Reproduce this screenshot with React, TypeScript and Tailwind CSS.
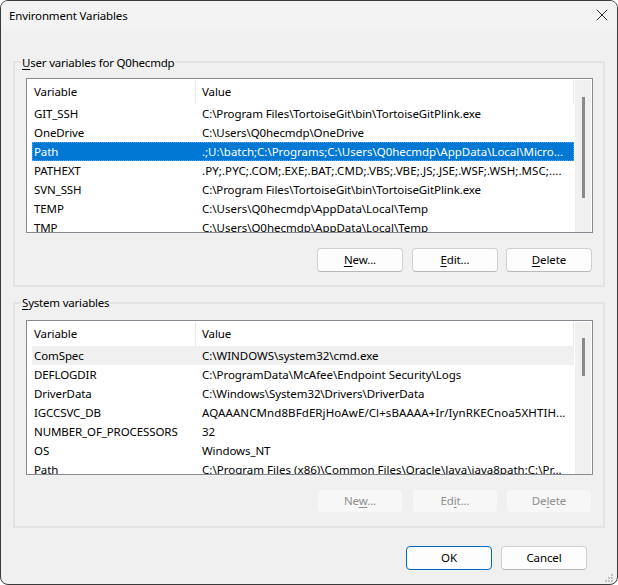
import { X } from 'lucide-react'

type Row = { name: string; value: string; selected?: boolean; hover?: boolean; fit?: string }

const userRows: Row[] = [
  { name: 'GIT_SSH', value: 'C:\\Program Files\\TortoiseGit\\bin\\TortoiseGitPlink.exe' },
  { name: 'OneDrive', value: 'C:\\Users\\Q0hecmdp\\OneDrive' },
  { name: 'Path', value: '.;U:\\batch;C:\\Programs;C:\\Users\\Q0hecmdp\\AppData\\Local\\Micro...', selected: true, fit: 'tracking-[-0.02px]' },
  { name: 'PATHEXT', value: '.PY;.PYC;.COM;.EXE;.BAT;.CMD;.VBS;.VBE;.JS;.JSE;.WSF;.WSH;.MSC;....', fit: 'tracking-[0.08px]' },
  { name: 'SVN_SSH', value: 'C:\\Program Files\\TortoiseGit\\bin\\TortoiseGitPlink.exe' },
  { name: 'TEMP', value: 'C:\\Users\\Q0hecmdp\\AppData\\Local\\Temp', fit: 'tracking-[-0.02px]' },
  { name: 'TMP', value: 'C:\\Users\\Q0hecmdp\\AppData\\Local\\Temp', fit: 'tracking-[-0.02px]' },
]

const systemRows: Row[] = [
  { name: 'ComSpec', value: 'C:\\WINDOWS\\system32\\cmd.exe', hover: true, fit: 'tracking-[-0.03px]' },
  { name: 'DEFLOGDIR', value: 'C:\\ProgramData\\McAfee\\Endpoint Security\\Logs', fit: 'tracking-[-0.04px]' },
  { name: 'DriverData', value: 'C:\\Windows\\System32\\Drivers\\DriverData' },
  { name: 'IGCCSVC_DB', value: 'AQAAANCMnd8BFdERjHoAwE/Cl+sBAAAA+Ir/IynRKECnoa5XHTIH...', fit: 'tracking-[0.09px]' },
  { name: 'NUMBER_OF_PROCESSORS', value: '32' },
  { name: 'OS', value: 'Windows_NT' },
  { name: 'Path', value: 'C:\\Program Files (x86)\\Common Files\\Oracle\\Java\\java8path;C:\\Pr...', fit: 'tracking-[0.02px]' },
]

function VarList({ rows, thumb }: { rows: Row[]; thumb: string }) {
  return (
    <div className="h-[155px] border border-[#868a91] bg-white flex overflow-hidden">
      <div className="w-[547px] shrink-0 pl-[5px]">
        <div className="h-[24px] mt-px flex leading-[23px]">
          <div className="w-[164px] shrink-0 pl-[2px] border-r border-[#e5e5e5]">Variable</div>
          <div className="flex-1 pl-[6px] border-r border-[#e5e5e5]">Value</div>
        </div>
        {rows.map((r) => (
          <div
            key={r.name}
            className={`h-[19px] flex leading-[20px] whitespace-nowrap overflow-hidden ${
              r.selected
                ? 'bg-[#0078d4] text-white outline-1 outline-dotted -outline-offset-1 outline-[#5aa5e0]'
                : r.hover
                  ? 'bg-[#f0f0f0]'
                  : ''
            }`}
          >
            <div className="w-[164px] shrink-0 pl-[2px]">{r.name}</div>
            <div className={`pl-[6px] ${r.fit ?? ''}`}>{r.value}</div>
          </div>
        ))}
      </div>
      <div className="w-[16px] shrink-0 mt-px ml-px bg-[#f0f0f0] relative">
        <div className={`absolute left-[7px] w-[3px] bg-[#8a8a8a] ${thumb}`} />
      </div>
    </div>
  )
}

function Btn({ pre, hot, post, disabled, primary, className = '' }: { pre?: string; hot?: string; post?: string; disabled?: boolean; primary?: boolean; className?: string }) {
  return (
    <div
      className={`w-[86px] h-[24px] rounded-[4px] border flex items-center justify-center ${className} ${
        disabled
          ? 'bg-[#f7f7f7] bg-clip-padding border-[#f0f0f0] text-[#8e8e8e]'
          : primary
            ? 'bg-[#fdfdfd] border-[#0067c0]'
            : 'bg-[#fdfdfd] border-[#d0d0d0] border-b-[#b8b8b8]'
      }`}
    >
      <span>
        {pre}
        {hot && <span className="underline underline-offset-2">{hot}</span>}
        {post}
      </span>
    </div>
  )
}

function Group({ title, hot, rows, thumb, disabled }: { title: string; hot: string; rows: Row[]; thumb: string; disabled?: boolean }) {
  return (
    <div className={`relative h-[226px] border-2 border-[#e3e3e3] pl-[11px] pr-[10px] ${disabled ? 'pt-[16px]' : 'pt-[15px]'}`}>
      <div className={`absolute left-[6px] px-[1px] bg-[#f0f0f0] leading-[18px] tracking-[-0.2px] ${disabled ? 'top-[-10px]' : 'top-[-9px]'}`}>
        <span className="underline underline-offset-2">{hot}</span>
        {title}
      </div>
      <VarList rows={rows} thumb={thumb} />
      <div className={`flex justify-end gap-[8px] pr-px ${disabled ? 'mt-[14px]' : 'mt-[15px]'}`}>
        <Btn className="mr-px" pre={disabled ? 'Ne' : ''} hot={disabled ? 'w' : 'N'} post={disabled ? '...' : 'ew...'} disabled={disabled} />
        <Btn pre={disabled ? 'Ed' : ''} hot={disabled ? 'i' : 'E'} post={disabled ? 't...' : 'dit...'} disabled={disabled} />
        <Btn pre={disabled ? 'De' : ''} hot={disabled ? 'l' : 'D'} post={disabled ? 'ete' : 'elete'} disabled={disabled} />
      </div>
    </div>
  )
}

export default function App() {
  return (
    <div className="w-[618px] h-[585px] bg-white overflow-hidden">
      <div className="relative w-[618px] h-[585px] border border-[#3a3a3a] rounded-[8px] bg-[#f0f0f0] overflow-hidden text-[11.5px] tracking-[-0.1px] text-black font-['Noto_Sans','Open_Sans',sans-serif]">
        <div className="h-[30px] bg-[#f3f3f3] flex items-center justify-between pl-[8px] pr-[5px]">
          <span className="tracking-[-0.15px]">Environment Variables</span>
          <X size={20} strokeWidth={1} className="-mt-[2px]" />
        </div>
        <div className="pt-[30px] pl-[12px] pr-[12px]">
          <Group hot="U" title="ser variables for Q0hecmdp" rows={userRows} thumb="top-[17px] h-[101px]" />
          <div className="h-[15px]" />
          <Group hot="S" title="ystem variables" rows={systemRows} thumb="top-[16px] h-[38px]" disabled />
          <div className="flex justify-end gap-[9px] mt-[18px] pr-[18px]">
            <Btn pre="OK" primary />
            <Btn pre="Cancel" />
          </div>
        </div>
        {/* resize grip */}
        <svg className="absolute right-[4px] bottom-[2px]" width="8" height="8" viewBox="0 0 8 8" fill="#c4c4c4">
          <rect x="6" y="0" width="2" height="2" />
          <rect x="3" y="3" width="2" height="2" />
          <rect x="6" y="3" width="2" height="2" />
          <rect x="0" y="6" width="2" height="2" />
          <rect x="3" y="6" width="2" height="2" />
          <rect x="6" y="6" width="2" height="2" />
        </svg>
      </div>
    </div>
  )
}
